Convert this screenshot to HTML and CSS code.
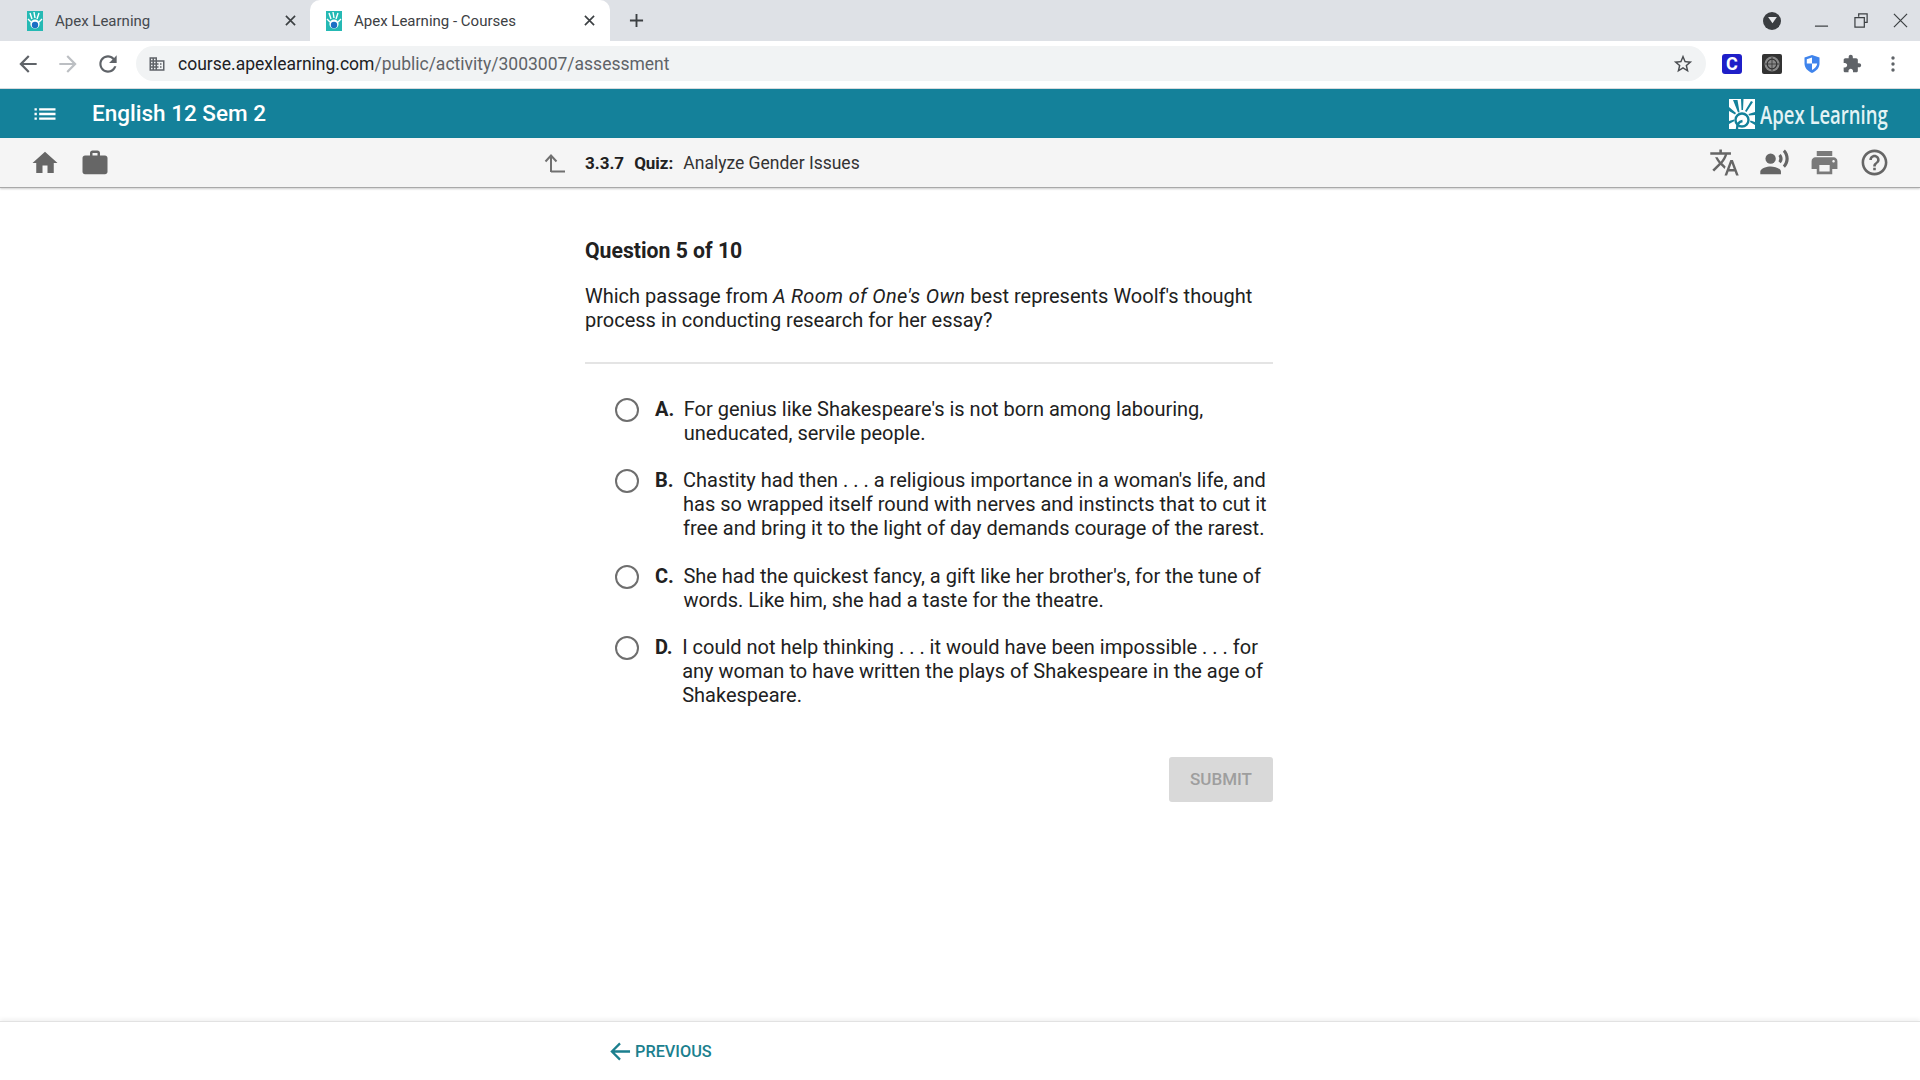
FILE: index.html
```html
<!DOCTYPE html>
<html lang="en">
<head>
    <meta charset="UTF-8">
    <title>Apex Learning - Courses</title>
    <link rel="stylesheet" href="styles.css">
</head>
<body>

    <!-- Browser tabs -->
    <div class="tabstrip">
        <div class="tab">
            <svg class="favicon" viewBox="0 0 16 20"><rect width="16" height="20" fill="#25b9b4"/><path d="M3 2l2 6M7 1l1 6M12 2l-2 6M1 8l3 3M15 8l-3 3" stroke="#fff" stroke-width="1.4"/><circle cx="8" cy="13" r="4.6" fill="#fff"/><circle cx="8" cy="14" r="3.2" fill="#1b6fc4"/></svg>
            <span class="tab-title">Apex Learning</span>
            <svg class="tab-close" viewBox="0 0 12 12"><path d="M1 1l10 10M11 1L1 11"/></svg>
        </div>
        <div class="tab active">
            <svg class="favicon" viewBox="0 0 16 20"><rect width="16" height="20" fill="#25b9b4"/><path d="M3 2l2 6M7 1l1 6M12 2l-2 6M1 8l3 3M15 8l-3 3" stroke="#fff" stroke-width="1.4"/><circle cx="8" cy="13" r="4.6" fill="#fff"/><circle cx="8" cy="14" r="3.2" fill="#1b6fc4"/></svg>
            <span class="tab-title">Apex Learning - Courses</span>
            <svg class="tab-close" viewBox="0 0 12 12"><path d="M1 1l10 10M11 1L1 11"/></svg>
        </div>
        <svg class="new-tab" viewBox="0 0 16 16"><path d="M8 1v14M1 8h14"/></svg>
        <div class="window-controls">
            <span class="profile-dot"><svg viewBox="0 0 10 8"><path d="M0 0h10L5 7z"/></svg></span>
            <svg class="win-icon" viewBox="0 0 16 16"><path d="M1 14h14"/></svg>
            <svg class="win-icon" viewBox="0 0 16 16"><path d="M5 4V1h9v9h-3M1 5h10v10H1z"/></svg>
            <svg class="win-icon" viewBox="0 0 16 16"><path d="M1 1l14 14M15 1L1 15"/></svg>
        </div>
    </div>

    <!-- Address bar -->
    <div class="toolbar">
        <svg class="nav-icon" viewBox="0 0 24 24"><path d="M20 11H7.83l5.59-5.59L12 4l-8 8 8 8 1.41-1.41L7.83 13H20v-2z"/></svg>
        <svg class="nav-icon faded" viewBox="0 0 24 24"><path d="M4 11h12.17l-5.59-5.59L12 4l8 8-8 8-1.41-1.41L16.17 13H4v-2z"/></svg>
        <svg class="nav-icon" viewBox="0 0 24 24"><path d="M17.65 6.35C16.2 4.9 14.21 4 12 4c-4.42 0-7.99 3.58-7.99 8s3.57 8 7.99 8c3.73 0 6.84-2.55 7.73-6h-2.08c-.82 2.33-3.04 4-5.65 4-3.31 0-6-2.69-6-6s2.69-6 6-6c1.66 0 3.14.69 4.22 1.78L13 11h7V4l-2.35 2.35z"/></svg>
        <div class="omnibox">
            <svg class="site-icon" viewBox="0 0 24 24"><path d="M12 7V3H2v18h20V7H12zM6 19H4v-2h2v2zm0-4H4v-2h2v2zm0-4H4V9h2v2zm0-4H4V5h2v2zm4 12H8v-2h2v2zm0-4H8v-2h2v2zm0-4H8V9h2v2zm0-4H8V5h2v2zm10 12h-8v-2h2v-2h-2v-2h2v-2h-2V9h8v10zm-2-8h-2v2h2v-2zm0 4h-2v2h2v-2z"/></svg>
            <span class="url"><span class="url-host">course.apexlearning.com</span>/public/activity/3003007/assessment</span>
            <svg class="star" viewBox="0 0 24 24"><path d="M22 9.24l-7.19-.62L12 2 9.19 8.63 2 9.24l5.46 4.73L5.82 21 12 17.27 18.18 21l-1.63-7.03L22 9.24zM12 15.4l-3.76 2.27 1-4.28-3.32-2.88 4.38-.38L12 6.1l1.71 4.04 4.38.38-3.32 2.88 1 4.28L12 15.4z"/></svg>
        </div>
        <div class="extensions">
            <span class="ext-c">C</span>
            <svg class="ext" viewBox="0 0 20 20"><rect width="20" height="20" rx="2" fill="#333"/><circle cx="10" cy="10" r="7.5" fill="#8a8a8a"/><circle cx="10" cy="10" r="4.8" fill="none" stroke="#333" stroke-width="1.2"/><path d="M3 10h14M10 3v14" stroke="#333" stroke-width=".8"/></svg>
            <svg class="ext" viewBox="0 0 20 20"><path d="M10 1l7.5 2.6v6c0 4.5-3.2 7.6-7.5 9.4-4.3-1.8-7.5-4.9-7.5-9.4v-6z" fill="#3f84ec"/><path d="M10 3.5v6H4.8V5.2zM10 9.5h5.2c-.3 3-2.4 5-5.2 6.4z" fill="#fff"/></svg>
            <svg class="ext ext-puzzle" viewBox="0 0 24 24"><path d="M20.5 11H19V7c0-1.1-.9-2-2-2h-4V3.5C13 2.12 11.88 1 10.5 1S8 2.12 8 3.5V5H4c-1.1 0-1.99.9-1.99 2v3.8H3.5c1.49 0 2.7 1.21 2.7 2.7s-1.21 2.7-2.7 2.7H2V20c0 1.1.9 2 2 2h3.8v-1.5c0-1.49 1.21-2.7 2.7-2.7 1.49 0 2.7 1.21 2.7 2.7V22H17c1.1 0 2-.9 2-2v-4h1.5c1.38 0 2.5-1.12 2.5-2.5S21.88 11 20.5 11z"/></svg>
            <svg class="ext ext-more" viewBox="0 0 4 16"><circle cx="2" cy="2" r="1.7"/><circle cx="2" cy="8" r="1.7"/><circle cx="2" cy="14" r="1.7"/></svg>
        </div>
    </div>

    <!-- Course header -->
    <header class="course-bar">
        <svg class="menu-icon" viewBox="0 0 24 24"><path d="M3 13h2v-2H3v2zm0 4h2v-2H3v2zm0-8h2V7H3v2zm4 4h14v-2H7v2zm0 4h14v-2H7v2zM7 7v2h14V7H7z"/></svg>
        <h1>English 12 Sem 2</h1>
        <div class="logo">
            <svg class="logo-mark" viewBox="0 0 26 30"><rect width="26" height="30" fill="#fff"/><path d="M4 1l4.5 0 2 12-1.5.5zM12 0l2.5 0-.5 11-1.5 0zM22 2l2 1-6.5 10-1.5-1zM0 8l7 6-1 1.5L0 12zM26 13v3l-6 .5-.5-1.5zM0 22l5-1.5.5 1.5L0 25zM26 23v3l-5-3 .5-1.5z" fill="#14819a"/><circle cx="13" cy="21" r="6.5" fill="none" stroke="#14819a" stroke-width="2.4"/><path d="M8 30c0-5 2-7.5 5.5-8" stroke="#14819a" stroke-width="2.4" fill="none"/></svg>
            <span class="logo-text">Apex Learning</span>
        </div>
    </header>

    <div class="sub-bar">
        <svg class="bar-icon" viewBox="0 0 24 24"><path d="M10 20v-6h4v6h5v-8h3L12 3 2 12h3v8z"/></svg>
        <svg class="bar-icon" viewBox="0 0 24 24"><path d="M20 6h-4V4c0-1.11-.89-2-2-2h-4c-1.11 0-2 .89-2 2v2H4c-1.11 0-1.99.89-1.99 2L2 19c0 1.11.89 2 2 2h16c1.11 0 2-.89 2-2V8c0-1.11-.89-2-2-2zm-6 0h-4V4h4v2z"/></svg>
        <div class="crumb">
            <svg class="crumb-up" viewBox="0 0 22 22"><path d="M7 20V4M1.5 9.5L7 3.5l5.5 6M7 19.5h14"/></svg>
            <span class="crumb-num">3.3.7</span>
            <span class="crumb-type">Quiz:</span>
            <span class="crumb-name">Analyze Gender Issues</span>
        </div>
        <div class="bar-tools">
            <svg class="tool-icon" viewBox="0 0 24 24"><path d="M12.87 15.07l-2.54-2.51.03-.03c1.74-1.94 2.98-4.17 3.71-6.53H17V4h-7V2H8v2H1v1.99h11.17C11.5 7.92 10.44 9.75 9 11.35 8.07 10.32 7.3 9.19 6.69 8h-2c.73 1.63 1.73 3.17 2.98 4.56l-5.09 5.02L4 19l5-5 3.11 3.11.76-2.04zM18.5 10h-2L12 22h2l1.12-3h4.75L21 22h2l-4.5-12zm-2.62 7l1.62-4.33L19.12 17h-3.24z"/></svg>
            <svg class="tool-icon" viewBox="0 0 24 24"><circle cx="9" cy="9" r="4"/><path d="M9 15c-2.67 0-8 1.34-8 4v2h16v-2c0-2.66-5.33-4-8-4zm7.76-9.64l-1.68 1.69c.84 1.18.84 2.71 0 3.89l1.68 1.69c2.02-2.02 2.02-5.07 0-7.27zM20.07 2l-1.63 1.63c2.77 3.02 2.77 7.56 0 10.74L20.07 16c3.9-3.89 3.91-9.95 0-14z"/></svg>
            <svg class="tool-icon print" viewBox="0 0 24 24"><path d="M19 8H5c-1.66 0-3 1.34-3 3v6h4v4h12v-4h4v-6c0-1.66-1.34-3-3-3zm-3 11H8v-5h8v5zm3-7c-.55 0-1-.45-1-1s.45-1 1-1 1 .45 1 1-.45 1-1 1zm-1-9H6v4h12V3z"/></svg>
            <svg class="tool-icon" viewBox="0 0 24 24"><path d="M11 18h2v-2h-2v2zm1-16C6.48 2 2 6.48 2 12s4.48 10 10 10 10-4.48 10-10S17.52 2 12 2zm0 18c-4.41 0-8-3.59-8-8s3.59-8 8-8 8 3.59 8 8-3.59 8-8 8zm0-14c-2.21 0-4 1.79-4 4h2c0-1.1.9-2 2-2s2 .9 2 2c0 2-3 1.75-3 5h2c0-2.25 3-2.5 3-5 0-2.21-1.79-4-4-4z"/></svg>
        </div>
    </div>

    <!-- Question -->
    <main class="quiz">
        <h2>Question 5 of 10</h2>
        <p class="prompt">Which passage from <em>A Room of One's Own</em> best represents Woolf's thought process in conducting research for her essay?</p>
        <hr>
        <div class="options">
            <div class="option">
                <span class="radio"></span>
                <span class="letter">A.</span>
                <span class="answer">For genius like Shakespeare's is not born among labouring, uneducated, servile people.</span>
            </div>
            <div class="option">
                <span class="radio"></span>
                <span class="letter">B.</span>
                <span class="answer">Chastity had then . . . a religious importance in a woman's life, and has so wrapped itself round with nerves and instincts that to cut it free and bring it to the light of day demands courage of the rarest.</span>
            </div>
            <div class="option">
                <span class="radio"></span>
                <span class="letter">C.</span>
                <span class="answer">She had the quickest fancy, a gift like her brother's, for the tune of words. Like him, she had a taste for the theatre.</span>
            </div>
            <div class="option">
                <span class="radio"></span>
                <span class="letter">D.</span>
                <span class="answer">I could not help thinking . . . it would have been impossible . . . for any woman to have written the plays of Shakespeare in the age of Shakespeare.</span>
            </div>
        </div>
        <div class="actions">
            <button class="submit" disabled>SUBMIT</button>
        </div>
    </main>

    <!-- Footer -->
    <footer class="pager">
        <a class="previous" href="#">
            <svg viewBox="0 0 22 22"><path d="M21 11H2M10.5 2.5L2 11l8.5 8.5"/></svg>
            PREVIOUS
        </a>
    </footer>

</body>
</html>
```

FILE: styles.css
```css
/* General */
html, body {
    height: 100%;
}

body {
    margin: 0;
    height: 1080px;
    overflow: hidden;
    display: flex;
    flex-direction: column;
    font-family: Roboto, Arial, sans-serif;
    color: #212121;
    background-color: #ffffff;
}

/* Browser tabs */
.tabstrip {
    display: flex;
    align-items: flex-end;
    height: 41px;
    background-color: #dee1e6;
    flex-shrink: 0;
}

.tab {
    display: flex;
    align-items: center;
    width: 300px;
    height: 41px;
    padding: 0 2px 0 27px;
    box-sizing: border-box;
    margin-right: 10px;
    color: #45494e;
    font-size: 15px;
}

.tab.active {
    width: 300px;
    margin-right: 0;
    padding: 0 13px 0 16px;
    background-color: #ffffff;
    border-radius: 10px 10px 0 0;
    color: #3c4043;
}

.favicon {
    width: 16px;
    height: 20px;
    margin-right: 12px;
    flex-shrink: 0;
}

.tab-title {
    flex: 1;
}

.tab-close {
    width: 11px;
    height: 11px;
    margin-right: 2px;
    fill: none;
    stroke: #3c4043;
    stroke-width: 1.8;
}

.new-tab {
    width: 15px;
    height: 15px;
    margin: 0 0 13px 19px;
    fill: none;
    stroke: #3c4043;
    stroke-width: 2;
}

.window-controls {
    display: flex;
    align-items: center;
    gap: 24px;
    margin-left: auto;
    height: 41px;
    padding-right: 12px;
}

.profile-dot {
    display: flex;
    align-items: center;
    justify-content: center;
    width: 18px;
    height: 18px;
    margin-right: 9px;
    border-radius: 50%;
    background-color: #3a3d41;
}

.profile-dot svg {
    width: 9px;
    height: 7px;
    fill: #e8eaed;
}

.win-icon {
    width: 15px;
    height: 15px;
    fill: none;
    stroke: #3c4043;
    stroke-width: 1.3;
}

.win-icon:nth-child(2) {
    margin-right: 1px;
}

/* Address bar */
.toolbar {
    display: flex;
    align-items: center;
    height: 48px;
    padding: 0 0 2px 15px;
    box-sizing: border-box;
    background-color: #ffffff;
    border-bottom: 1px solid #d7dadd;
    flex-shrink: 0;
}

.nav-icon {
    width: 26px;
    height: 26px;
    margin-right: 14px;
    fill: #5f6368;
}

.nav-icon.faded {
    fill: #bcbfc3;
}

.omnibox {
    display: flex;
    align-items: center;
    width: 1570px;
    height: 35px;
    margin-left: 1px;
    padding: 0 12px 0 12px;
    box-sizing: border-box;
    background-color: #f1f3f4;
    border-radius: 18px;
}

.site-icon {
    width: 18px;
    height: 18px;
    margin-right: 12px;
    fill: #5f6368;
}

.url {
    flex: 1;
    font-size: 17.5px;
    color: #5f6368;
}

.url-host {
    color: #202124;
}

.star {
    width: 22px;
    height: 22px;
    fill: #4a4d51;
}

.extensions {
    display: flex;
    align-items: center;
    margin-left: 16px;
    gap: 20px;
}

.ext-c {
    display: flex;
    align-items: center;
    justify-content: center;
    width: 20px;
    height: 20px;
    border-radius: 3px;
    background-color: #1f1fc8;
    color: #ffffff;
    font-size: 18px;
    font-weight: 700;
}

.ext {
    width: 20px;
    height: 20px;
}

.ext-puzzle {
    fill: #5f6368;
}

.ext-more {
    width: 4px;
    height: 16px;
    margin-left: 9px;
    fill: #5f6368;
}

/* Course header */
.course-bar {
    display: flex;
    align-items: center;
    height: 49px;
    padding: 0 32px 0 33px;
    background-color: #14819a;
    color: #ffffff;
    flex-shrink: 0;
}

.menu-icon {
    width: 28px;
    height: 28px;
    margin-left: -2px;
    fill: #ffffff;
}

.course-bar h1 {
    margin: 0 0 2px 33px;
    font-size: 22.5px;
    font-weight: 500;
}

.logo {
    display: flex;
    align-items: center;
    gap: 5px;
    margin-left: auto;
}

.logo-mark {
    width: 26px;
    height: 30px;
}

.logo-text {
    display: inline-block;
    width: 128px;
    font-family: "Open Sans", Arial, sans-serif;
    font-size: 25px;
    font-weight: 600;
    color: #e3f3f5;
    white-space: nowrap;
    transform: scaleX(0.74);
    transform-origin: left center;
}

/* Sub bar */
.sub-bar {
    display: flex;
    align-items: center;
    height: 50px;
    padding: 0 30px;
    background-color: #f5f5f5;
    border-bottom: 1px solid #a9a9a9;
    box-sizing: border-box;
    box-shadow: 0 1px 2px rgba(0, 0, 0, 0.2);
    flex-shrink: 0;
}

.bar-icon {
    width: 30px;
    height: 30px;
    margin-right: 20px;
    fill: #666666;
}

.crumb {
    display: flex;
    align-items: center;
    margin-left: 414px;
    font-size: 17px;
}

.crumb-up {
    width: 22px;
    height: 22px;
    margin-right: 19px;
    fill: none;
    stroke: #707070;
    stroke-width: 2;
}

.crumb-num, .crumb-type {
    font-weight: 700;
    margin-right: 10px;
}

.crumb-name {
    font-size: 17.5px;
    color: #333333;
}

.bar-tools {
    display: flex;
    gap: 19px;
    margin-left: auto;
}

.tool-icon {
    width: 31px;
    height: 31px;
    fill: #666666;
}

.tool-icon.print {
    fill: #7a7a7a;
}

/* Question */
.quiz {
    flex: 1;
    width: 688px;
    margin-left: 585px;
    padding-top: 49px;
    box-sizing: border-box;
}

.quiz h2 {
    margin: 0;
    font-size: 21.2px;
    line-height: 28px;
    font-weight: 700;
}

.prompt {
    margin: 19px 0 0;
    font-size: 20px;
    line-height: 24px;
}

.prompt em {
    letter-spacing: 0.3px;
}

.quiz hr {
    margin: 30px 0 0;
    border: 0;
    border-top: 2px solid #e4e4e4;
}

.options {
    display: flex;
    flex-direction: column;
    gap: 23px;
    margin-top: 33px;
    padding-left: 30px;
}

.option {
    display: flex;
    align-items: flex-start;
    font-size: 20px;
    line-height: 24px;
}

.option:nth-child(2) {
    margin-bottom: 1px;
}

.radio {
    width: 20px;
    height: 20px;
    margin: 1px 16px 0 0;
    border: 2px solid #6e6e6e;
    border-radius: 50%;
    flex-shrink: 0;
}

.letter {
    font-weight: 700;
    margin-right: 9.5px;
    flex-shrink: 0;
}

.answer {
    flex: 1;
}

.actions {
    display: flex;
    justify-content: flex-end;
    margin-top: 50px;
}

.submit {
    width: 104px;
    height: 45px;
    border: 0;
    border-radius: 3px;
    background-color: #d9d9d9;
    color: #9e9e9e;
    font-family: Roboto, Arial, sans-serif;
    font-size: 17px;
    font-weight: 500;
    padding: 0 0 2px;
}

/* Footer */
.pager {
    display: flex;
    align-items: center;
    height: 59px;
    padding-left: 610px;
    border-top: 1px solid #e2e2e2;
    box-shadow: 0 -2px 4px rgba(0, 0, 0, 0.06);
    box-sizing: border-box;
    flex-shrink: 0;
}

.previous {
    display: flex;
    align-items: center;
    gap: 4px;
    color: #1b7f8e;
    font-size: 16.3px;
    font-weight: 500;
    text-decoration: none;
}

.previous svg {
    width: 21px;
    height: 21px;
    fill: none;
    stroke: #1b7f8e;
    stroke-width: 2.4;
}
```
